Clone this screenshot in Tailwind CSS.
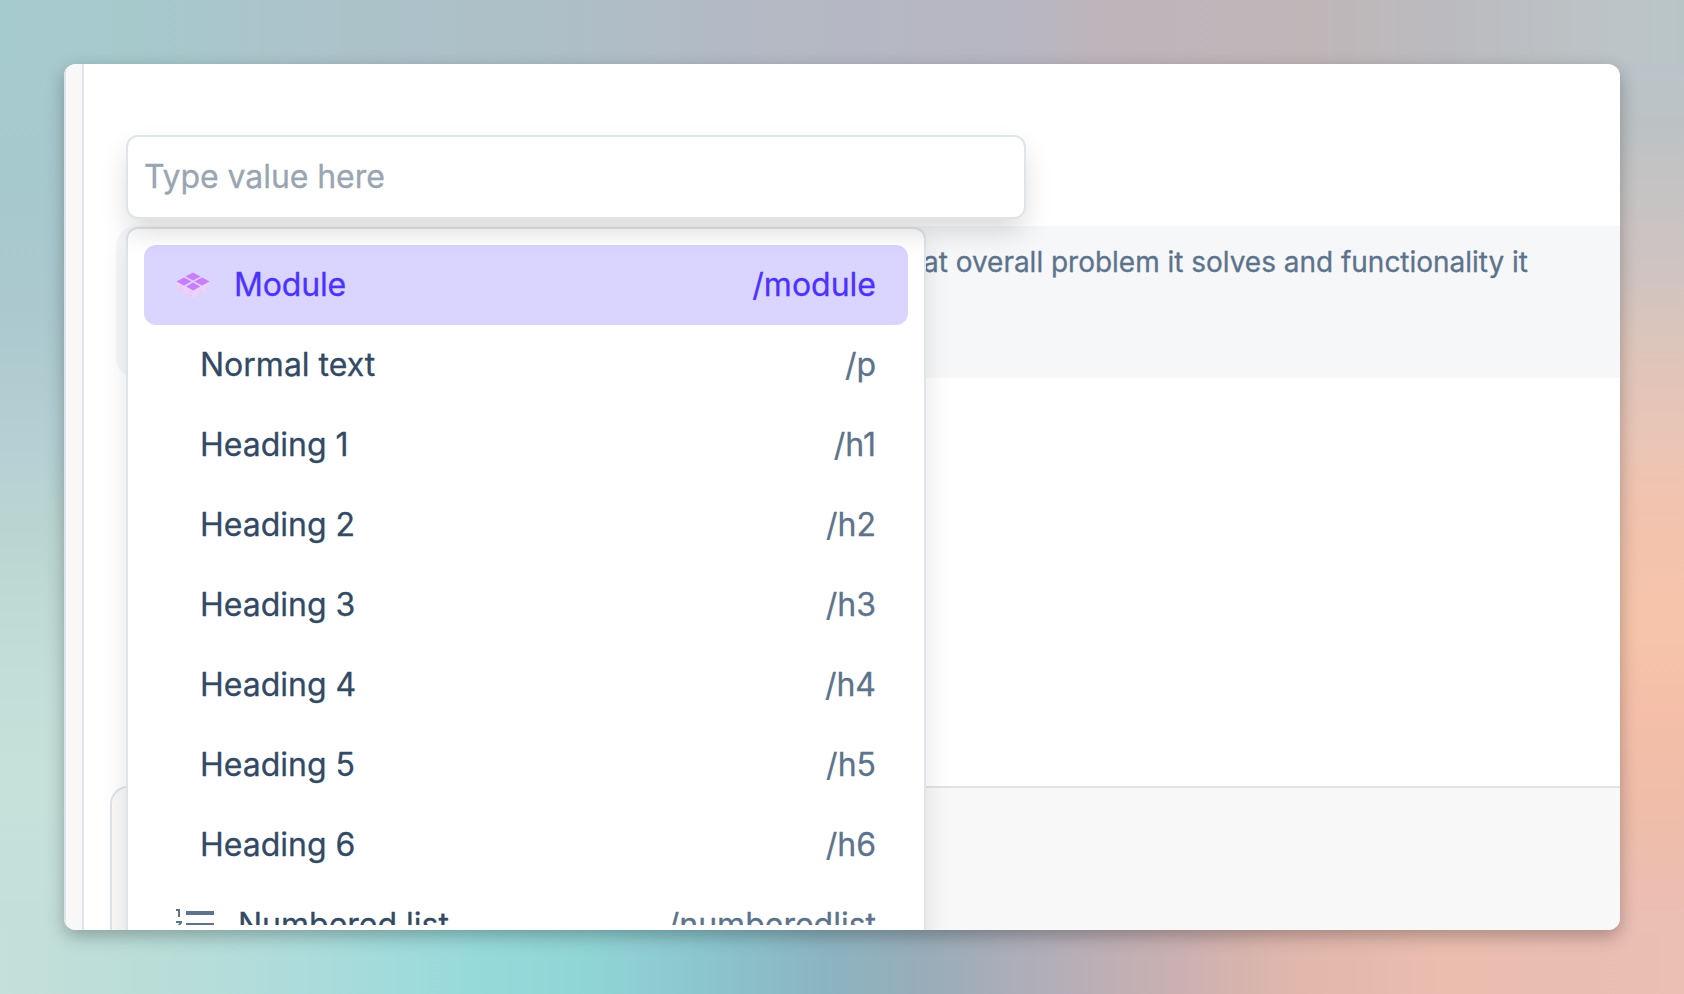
<!DOCTYPE html>
<html lang="en">
<head>
<meta charset="utf-8">
<title>Editor</title>
<script src="https://cdn.jsdelivr.net/npm/@tailwindcss/browser@4"></script>
</head>
<body class="w-[1684px] h-[994px] overflow-hidden font-[Inter,sans-serif] [-webkit-text-stroke:0.3px]">
<div class="grid h-full p-16 [background:linear-gradient(90deg,#a6cbcf_0%,#a6c9cc_8%,#abc3ca_18%,#adbfc7_32%,#b4b9c4_46%,#b7b6c3_60%,#bdb5bb_65%,#bfb6b8_78%,#bbbbbf_86%,#bcc4c7_96%,#b8c5c7_100%)_0_0/100%_64px_no-repeat,linear-gradient(90deg,#c5dfda_0%,#b9ddd8_10%,#acdcdb_18%,#97dada_28%,#90d5d6_35%,#8bc5ce_42%,#8bb4c1_49%,#99adb9_55%,#b5aeb8_63%,#cbb0b1_70%,#e1b7ac_77%,#eabdaf_86%,#eabdb2_94%,#eabfb4_100%)_0_100%/100%_64px_no-repeat,linear-gradient(180deg,#a6cacd_0%,#a6c9ce_14%,#abc8ce_28%,#b4d0d4_44%,#bad5d1_53%,#c1ddd7_68%,#c5e1da_82%,#c4dfda_100%)_0_64px/50%_866px_no-repeat,linear-gradient(180deg,#bac4c8_0%,#bcc2c4_7%,#c5c3c4_14%,#cfc4c1_24%,#dec5ba_33%,#ebc5b5_44%,#f3c3ac_54%,#f6c4aa_66%,#f5bfa8_74%,#efbda9_86%,#ecbeb1_95%,#eabfb4_100%)_100%_64px/50%_866px_no-repeat]">
  <!-- editor window -->
  <div class="relative flex overflow-hidden rounded-xl bg-white w-[1556px] h-[866px] shadow-[0_6px_18px_rgba(0,0,0,0.28)]">
    <aside class="w-5 shrink-0 border-x-2 border-[#dfe4e8] bg-[#f8f8f8]"></aside>
    <main class="flex flex-1 flex-col">
      <div class="h-[162px] shrink-0"></div>
      <div class="ml-8 h-[152px] shrink-0 rounded-l-[20px] bg-[#f6f7f9] pl-[807px] pt-4">
        <p class="whitespace-nowrap text-[28px] leading-10 tracking-[-0.02px] text-[#5d738c]">at overall problem it solves and functionality it</p>
      </div>
      <div class="mt-[408px] ml-[26px] flex-1 rounded-tl-[18px] border-t-2 border-l-2 border-[#dfe4e8] bg-[#f8f8f8]"></div>
    </main>

    <!-- slash command menu -->
    <div class="absolute left-[62px] top-[163px] h-[740px] w-[800px] rounded-xl border-2 border-[#dfe4e8] bg-white p-4 shadow-[0_12px_28px_-2px_rgba(0,0,0,0.12)]">
      <ul class="h-[680px] overflow-hidden text-[32px] text-[#334a64]">
        <li class="flex h-20 items-center rounded-xl bg-[#dad5ff] px-8 text-[#4b32ff]">
          <svg class="mr-[24px] h-[28px] w-[34px]" viewBox="0 0 34 28">
            <path d="M1 11v7l16 9 16-9v-7l-16 9z" fill="#e8d3fa"/>
            <path d="M1 18l4-5 4 9zM11 24l5-5v8zM20 25l5-7 1 4zM29 20l4-6v4z" fill="#efc9f2"/>
            <path d="M17 1.500l7.500 4-7.500 4-7.500-4zM8 6.500l7.500 4-7.500 4-7.500-4zM26 6.500l7.500 4-7.500 4-7.500-4zM17.200 11.500l7 4-7 4-7-4z" fill="#ca7dff"/>
          </svg>
          <span class="tracking-[-0.15px]">Module</span><span class="ml-auto">/module</span>
        </li>
        <li class="flex h-20 items-center justify-between pl-14 pr-8"><span>Normal text</span><span class="text-[#5d738c]">/p</span></li>
        <li class="flex h-20 items-center justify-between pl-14 pr-8"><span>Heading 1</span><span class="text-[#5d738c]">/h1</span></li>
        <li class="flex h-20 items-center justify-between pl-14 pr-8"><span>Heading 2</span><span class="text-[#5d738c]">/h2</span></li>
        <li class="flex h-20 items-center justify-between pl-14 pr-8"><span>Heading 3</span><span class="text-[#5d738c]">/h3</span></li>
        <li class="flex h-20 items-center justify-between pl-14 pr-8"><span>Heading 4</span><span class="text-[#5d738c]">/h4</span></li>
        <li class="flex h-20 items-center justify-between pl-14 pr-8"><span>Heading 5</span><span class="text-[#5d738c]">/h5</span></li>
        <li class="flex h-20 items-center justify-between pl-14 pr-8"><span>Heading 6</span><span class="text-[#5d738c]">/h6</span></li>
        <li class="flex h-20 items-center px-8">
          <svg class="mr-[24px] h-8 w-[38px]" viewBox="0 0 38 32" fill="#5d738c">
            <path d="M0 0h4v8H2V2H0zM0 12h6v2l-3.500 4H6v2H0v-2l3.500-4H0zM0 24h6v8H0v-2h4v-1H2v-2h2v-1H0zM10 2h28v4H10zM10 14h28v4H10zM10 26h28v4H10z"/>
          </svg>
          <span>Numbered list</span><span class="ml-auto text-[#5d738c]">/numberedlist</span>
        </li>
      </ul>
    </div>

    <!-- value field -->
    <div class="absolute left-[62px] top-[71px] flex h-[84px] w-[900px] items-center rounded-xl border-2 border-[#dfe4e8] bg-white px-4 text-[32px] tracking-[-0.07px] text-[#9aa5b3] shadow-[0_14px_28px_-2px_rgba(0,0,0,0.15)]">Type value here</div>
  </div>
</div>
</body>
</html>
